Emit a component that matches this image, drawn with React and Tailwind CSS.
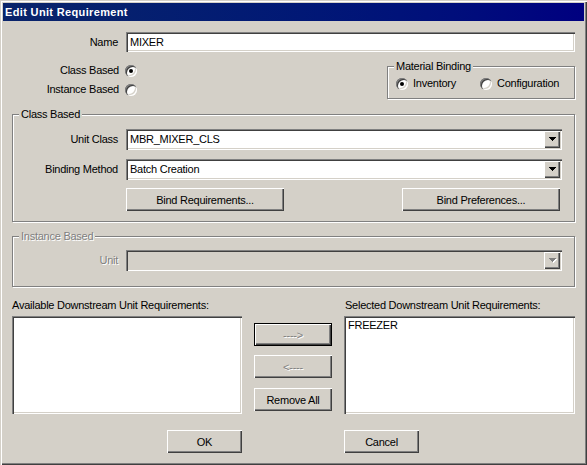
import React from 'react';

// classic 3D edges, drawn with inset shadows
const raised = 'shadow-[inset_1px_1px_0_#fff,inset_-1px_-1px_0_#404040,inset_-2px_-2px_0_#808080]';
const sunken = 'shadow-[inset_1px_1px_0_#808080,inset_2px_2px_0_#404040,inset_-1px_-1px_0_#fff,inset_-2px_-2px_0_#d4d0c8]';
const etched = 'border border-[#808080] shadow-[inset_1px_1px_0_#fff,1px_1px_0_#fff]';
const grayText = 'text-[#808080] [text-shadow:1px_1px_0_#fff]';

const Radio = ({ checked }) => (
    <span className="flex h-[12px] w-[12px] shrink-0 items-center justify-center rounded-full bg-white shadow-[inset_1px_1px_0_#808080,inset_2px_2px_0_#404040,inset_-1px_-1px_0_#fff,inset_-2px_-2px_0_#d4d0c8]">
        {checked && <span className="h-[4px] w-[4px] rounded-full bg-black" />}
    </span>
);

const Arrow = ({ disabled }) => (
    <svg width="8" height="5" viewBox="0 0 8 5" className="block">
        {disabled && (
            <path d="M1 1h7v1H1z M2 2h5v1H2z M3 3h3v1H3z M4 4h1v1H4z" fill="#fff" />
        )}
        <path d="M0 0h7v1H0z M1 1h5v1H1z M2 2h3v1H2z M3 3h1v1H3z" fill={disabled ? '#808080' : '#000'} />
    </svg>
);

const Combo = ({ value, disabled }) => (
    <div className={`flex h-[21px] w-[436px] p-[2px] ${sunken} ${disabled ? 'bg-[#d4d0c8]' : 'bg-white'}`}>
        <div className="flex flex-1 items-center pl-[2px]">{value}</div>
        <div className={`flex w-[16px] items-center justify-center bg-[#d4d0c8] pl-[1px] ${raised}`}>
            <Arrow disabled={disabled} />
        </div>
    </div>
);

const Button = ({ children, width = 'w-[75px]', disabled, focused }) => (
    <div
        className={`flex h-[23px] ${width} shrink-0 items-center justify-center bg-[#d4d0c8] pt-[1px] ${raised} ${
            focused ? 'border border-black' : ''
        } ${disabled ? grayText : ''}`}
    >
        {children}
    </div>
);

const GroupBox = ({ title, disabled, className, children }) => (
    <div className={`relative ${etched} ${className}`}>
        <span className={`absolute -top-[7px] left-[6px] bg-[#d4d0c8] px-[2px] leading-[13px] ${disabled ? grayText : ''}`}>
            {title}
        </span>
        {children}
    </div>
);

export default function App() {
    return (
        <div className="font-['Liberation_Sans',Arial,sans-serif] text-[11px] leading-[13px] text-black">
            <div className="flex h-[465px] w-[587px] flex-col bg-[#d4d0c8] p-[3px] shadow-[inset_1px_1px_0_#d4d0c8,inset_2px_2px_0_#fff,inset_-1px_-1px_0_#404040,inset_-2px_-2px_0_#808080]">
                {/* caption */}
                <div className="flex h-[18px] shrink-0 items-center bg-linear-to-r from-[#0a246a] to-[#000080] pl-[2px] font-bold tracking-[0.35px] text-white">
                    Edit Unit Requirement
                </div>

                <div className="flex flex-col px-[9px] tracking-[-0.25px]">
                    {/* name */}
                    <div className="mt-[11px] flex h-[20px] items-center">
                        <span className="w-[106px] text-right">Name</span>
                        <div className={`ml-[8px] flex h-[20px] flex-1 items-center bg-white pl-[4px] ${sunken}`}>MIXER</div>
                    </div>

                    {/* kind + material binding */}
                    <div className="flex h-[48px] items-start">
                        <div className="flex flex-col pt-[12px]">
                            <div className="flex h-[13px] items-center">
                                <span className="w-[107px] text-right">Class Based</span>
                                <span className="ml-[6px]">
                                    <Radio checked />
                                </span>
                            </div>
                            <div className="mt-[6px] flex h-[13px] items-center">
                                <span className="w-[107px] text-right">Instance Based</span>
                                <span className="ml-[6px]">
                                    <Radio />
                                </span>
                            </div>
                        </div>
                        <GroupBox title="Material Binding" className="ml-auto mt-[14px] h-[33px] w-[188px]">
                            <div className="flex items-center pl-[8px] pt-[10px]">
                                <div className="flex w-[84px] items-center gap-[5px]">
                                    <Radio checked />
                                    <span>Inventory</span>
                                </div>
                                <div className="flex items-center gap-[5px]">
                                    <Radio />
                                    <span>Configuration</span>
                                </div>
                            </div>
                        </GroupBox>
                    </div>

                    {/* class based */}
                    <GroupBox title="Class Based" className="mt-[14px] h-[108px]">
                        <div className="flex flex-col pt-[14px]">
                            <div className="flex items-center">
                                <span className="w-[105px] text-right">Unit Class</span>
                                <div className="ml-[8px]">
                                    <Combo value="MBR_MIXER_CLS" />
                                </div>
                            </div>
                            <div className="mt-[9px] flex items-center">
                                <span className="w-[105px] text-right">Binding Method</span>
                                <div className="ml-[8px]">
                                    <Combo value="Batch Creation" />
                                </div>
                            </div>
                            <div className="mt-[8px] flex pl-[113px]">
                                <Button width="w-[158px]">Bind Requirements...</Button>
                                <div className="ml-[118px]">
                                    <Button width="w-[158px]">Bind Preferences...</Button>
                                </div>
                            </div>
                        </div>
                    </GroupBox>

                    {/* instance based */}
                    <GroupBox title="Instance Based" disabled className="mt-[14px] h-[51px]">
                        <div className="flex items-center pt-[13px]">
                            <span className={`w-[105px] text-right ${grayText}`}>Unit</span>
                            <div className="ml-[8px]">
                                <Combo value="" disabled />
                            </div>
                        </div>
                    </GroupBox>

                    {/* downstream lists */}
                    <div className="mt-[12px] flex h-[13px]">
                        <span className="w-[332px]">Available Downstream Unit Requirements:</span>
                        <span className="pl-[1px]">Selected Downstream Unit Requirements:</span>
                    </div>
                    <div className="mt-[4px] flex h-[98px]">
                        <div className={`h-[98px] w-[230px] bg-white ${sunken}`} />
                        <div className="ml-[12px] flex w-[78px] flex-col">
                            <div className="mt-[7px]">
                                <Button width="w-[78px]" disabled focused>
                                    ----&gt;
                                </Button>
                            </div>
                            <div className="mt-[9px]">
                                <Button width="w-[78px]" disabled>
                                    &lt;----
                                </Button>
                            </div>
                            <div className="mt-[10px]">
                                <Button width="w-[78px]">Remove All</Button>
                            </div>
                        </div>
                        <div className={`ml-[12px] h-[98px] w-[231px] bg-white pl-[4px] pt-[3px] ${sunken}`}>FREEZER</div>
                    </div>

                    {/* dialog buttons */}
                    <div className="mt-[16px] flex">
                        <div className="ml-[155px]">
                            <Button>OK</Button>
                        </div>
                        <div className="ml-[102px]">
                            <Button>Cancel</Button>
                        </div>
                    </div>
                </div>
            </div>
        </div>
    );
}
